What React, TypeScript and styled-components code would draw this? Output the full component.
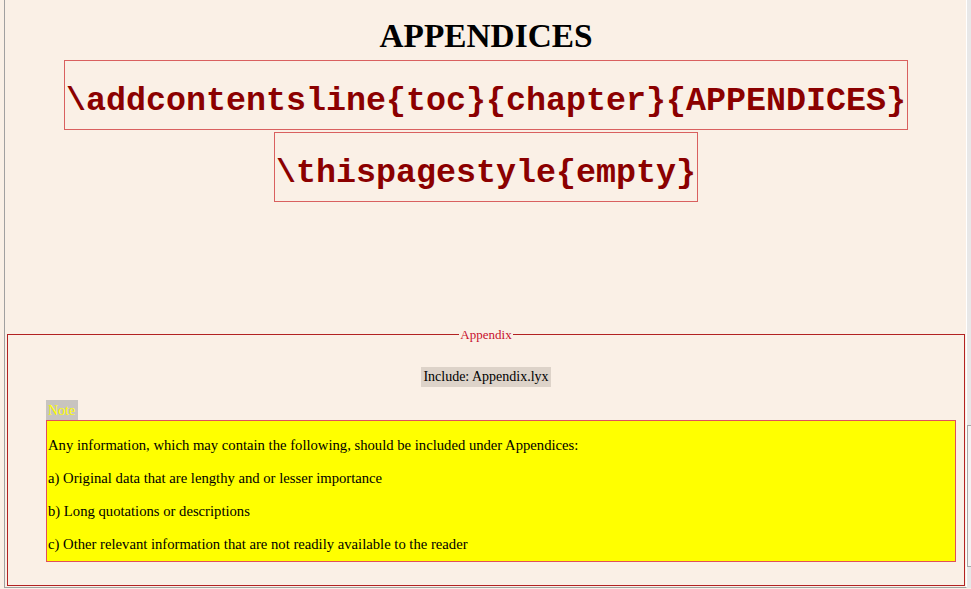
import React from "react";
import styled, { createGlobalStyle } from "styled-components";

const Global = createGlobalStyle`
  html, body {
    margin: 0;
    padding: 0;
    background: #faf0e6;
  }
  * { box-sizing: border-box; }
`;

const Page = styled.div`
  width: 971px;
  height: 589px;
  display: flex;
  background: #faf0e6;
  overflow: hidden;
  font-family: "Liberation Serif", "Times New Roman", serif;
`;

const Frame = styled.div`
  margin-left: 4px;
  width: 963px;
  height: 588px;
  border-left: 1px solid #a0a0a0;
  border-bottom: 1px solid #a0a0a0;
  border-right: 1px solid #ffffff;
  display: flex;
  flex-direction: column;
  align-items: center;
  padding-left: 1px;
`;

const Gutter = styled.div`
  width: 4px;
  height: 588px;
  background: #e8e8e8;
  display: flex;
  flex-direction: column;
  padding-top: 425px;
`;

const Thumb = styled.div`
  width: 4px;
  height: 142px;
  border: 1px solid #a8a8a8;
  border-right: none;
  background: #f4f4f4;
`;

const Title = styled.h1`
  margin: 17px 0 5px;
  font-size: 33.33px;
  line-height: 38px;
  font-weight: bold;
  color: #000;
  font-family: "Liberation Serif", "Times New Roman", serif;
`;

const CodeBox = styled.div`
  border: 1px solid #d9605f;
  padding: 21px 1px 9px;
  font-family: "Liberation Mono", "Courier New", monospace;
  font-weight: bold;
  font-size: 33.33px;
  line-height: 38px;
  color: #8b0000;
  white-space: pre;
  & + & {
    margin-top: 2px;
  }
`;

const Box = styled.fieldset`
  align-self: stretch;
  margin: 125px 1px 1px 1px;
  padding: 0 1px;
  border: 1px solid #b22222;
  flex: 1;
  min-width: 0;
`;

const Legend = styled.legend`
  margin: 0 auto;
  padding: 0 1px;
  font-size: 13px;
  line-height: 15px;
  color: #c8102e;
`;

const IncludeRow = styled.div`
  display: flex;
  justify-content: center;
  margin-top: 25px;
`;

const Include = styled.span`
  display: inline-block;
  background: #ddd3c9;
  padding: 1px 2px;
  font-size: 14px;
  line-height: 18px;
  color: #000;
`;

const NoteSection = styled.div`
  margin-top: 13px;
  padding: 0 7px 0 37px;
  display: flex;
  flex-direction: column;
  align-items: flex-start;
`;

const NoteLabel = styled.span`
  display: inline-block;
  background: #c8c4c0;
  color: #ffff00;
  font-size: 14px;
  line-height: 19px;
  height: 20px;
  padding: 1px 3px 0 2px;
`;

const NoteBody = styled.div`
  align-self: stretch;
  background: #ffff00;
  border: 1px solid #e0505a;
  padding: 15px 1px 8px;
  display: flex;
  flex-direction: column;
  gap: 15px;
`;

const Para = styled.p`
  margin: 0;
  font-size: 14.67px;
  line-height: 18px;
  color: #000;
`;

export default function App() {
  return (
    <>
      <Global />
      <Page>
        <Frame>
          <Title>APPENDICES</Title>
          <CodeBox>{"\\addcontentsline{toc}{chapter}{APPENDICES}"}</CodeBox>
          <CodeBox>{"\\thispagestyle{empty}"}</CodeBox>
          <Box>
            <Legend>Appendix</Legend>
            <IncludeRow>
              <Include>Include: Appendix.lyx</Include>
            </IncludeRow>
            <NoteSection>
              <NoteLabel>Note</NoteLabel>
              <NoteBody>
                <Para>
                  Any information, which may contain the following, should be
                  included under Appendices:
                </Para>
                <Para>a) Original data that are lengthy and or lesser importance</Para>
                <Para>b) Long quotations or descriptions</Para>
                <Para>c) Other relevant information that are not readily available to the reader</Para>
              </NoteBody>
            </NoteSection>
          </Box>
        </Frame>
        <Gutter>
          <Thumb />
        </Gutter>
      </Page>
    </>
  );
}
